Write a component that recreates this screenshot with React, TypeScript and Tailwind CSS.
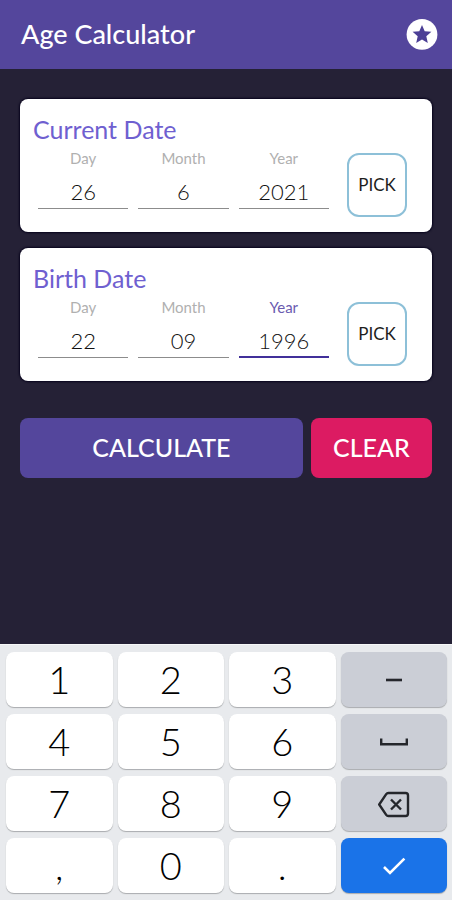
import { useState } from "react";
import type { ReactNode } from "react";
import clsx from "clsx";

type FieldProps = {
  id: string;
  label: string;
  value: string;
  active?: boolean;
};

const Field = ({ id, label, value, active }: FieldProps) => {
  const [text, setText] = useState(value);

  return (
    <div className="flex min-w-0 flex-1 flex-col text-center">
      <label
        htmlFor={id}
        className={clsx(
          "text-[15px] leading-[18px]",
          active ? "text-[#6a5bb0]" : "text-[#b0b0b0]"
        )}
      >
        {label}
      </label>
      <input
        id={id}
        inputMode="numeric"
        value={text}
        onChange={(e) => setText(e.target.value)}
        className={clsx(
          "h-[42px] w-full pt-2 text-center text-[22px] font-light text-[#111111] outline-none",
          active ? "border-b-2 border-[#41309a]" : "border-b border-[#8c8c8c]"
        )}
      />
    </div>
  );
};

type DateCardProps = {
  title: string;
  children: ReactNode;
};

const DateCard = ({ title, children }: DateCardProps) => {
  return (
    <section className="rounded-lg bg-white pt-[14px] pr-[25px] pb-[15px] pl-[13px] shadow-[0_0_2px_1px_#07031c]">
      <h2 className="text-[25px] leading-8 text-[#6f60d0]">{title}</h2>
      <div className="mt-1 flex pl-[5px]">
        <div className="flex flex-1 gap-[10px]">{children}</div>
        <button
          type="button"
          className="mt-1 ml-[18px] h-16 w-[60px] rounded-xl border-2 border-[#8dc0d8] text-[17px] text-[#1d1d1d]"
        >
          PICK
        </button>
      </div>
    </section>
  );
};

type KeyProps = {
  label?: string;
  tone?: "light" | "grey" | "blue";
  children: ReactNode;
};

const Key = ({ label, tone = "light", children }: KeyProps) => {
  return (
    <button
      type="button"
      aria-label={label}
      className={clsx(
        "flex h-[55px] items-center justify-center rounded-lg text-[38px] font-light shadow-[0_1px_1px_#a9abae]",
        tone === "light" && "bg-white text-black",
        tone === "grey" && "bg-[#cbced6] text-[#25272c]",
        tone === "blue" && "bg-[#1a73e8] text-white"
      )}
    >
      {children}
    </button>
  );
};

const Keypad = () => {
  return (
    <div className="grid grid-cols-4 gap-x-[5px] gap-y-[7px] border-t border-[#f6f7f8] bg-[#e8eaed] pt-[7px] pr-[5px] pb-[7px] pl-[6px]">
      <Key>1</Key>
      <Key>2</Key>
      <Key>3</Key>
      <Key label="Minus" tone="grey">
        <svg width="32" height="32" viewBox="0 0 32 32" fill="none" stroke="currentColor">
          <path d="M8 16H24" strokeWidth="2.6" />
        </svg>
      </Key>
      <Key>4</Key>
      <Key>5</Key>
      <Key>6</Key>
      <Key label="Space" tone="grey">
        <svg width="32" height="32" viewBox="0 0 32 32" fill="none" stroke="currentColor">
          <path d="M3.2 12.4V18.2H28.8V12.4" strokeWidth="2.4" />
        </svg>
      </Key>
      <Key>7</Key>
      <Key>8</Key>
      <Key>9</Key>
      <Key label="Backspace" tone="grey">
        <svg width="32" height="32" viewBox="0 0 32 32" fill="none" stroke="currentColor">
          <path
            d="M10.4 5H27.6Q30 5 30 7.4V25.6Q30 28 27.6 28H10.4Q9 28 8.2 26.8L1.2 16.5L8.2 6.2Q9 5 10.4 5Z"
            strokeWidth="2.4"
            strokeLinejoin="round"
          />
          <path d="M13 11.5L23 21.5M23 11.5L13 21.5" strokeWidth="2.4" />
        </svg>
      </Key>
      <Key>,</Key>
      <Key>0</Key>
      <Key>.</Key>
      <Key label="Done" tone="blue">
        <svg width="32" height="32" viewBox="0 0 32 32" fill="none" stroke="currentColor">
          <path d="M6 17L12 23L26.4 8.6" strokeWidth="2.6" />
        </svg>
      </Key>
    </div>
  );
};

export default function App() {
  return (
    <div className="flex min-h-screen flex-col bg-[#252136] font-['Lato',sans-serif]">
      <header className="flex h-[69px] items-center justify-between bg-[#54469c] pr-[14px] pl-[21px]">
        <h1 className="text-[27px] font-medium text-white">Age Calculator</h1>
        <button type="button" aria-label="Rate this app">
          <svg width="32" height="32" viewBox="0 0 32 32">
            <circle cx="16" cy="15.4" r="15.4" fill="#fff" />
            <path
              d="M16 6L18.7 12.2L25.4 12.8L20.3 17.3L21.8 24L16 20.5L10.2 24L11.7 17.3L6.6 12.8L13.3 12.2Z"
              fill="#4c3f96"
            />
          </svg>
        </button>
      </header>

      <main className="flex-1 px-5 pt-[30px]">
        <div className="flex flex-col gap-4">
          <DateCard title="Current Date">
            <Field id="current-day" label="Day" value="26" />
            <Field id="current-month" label="Month" value="6" />
            <Field id="current-year" label="Year" value="2021" />
          </DateCard>
          <DateCard title="Birth Date">
            <Field id="birth-day" label="Day" value="22" />
            <Field id="birth-month" label="Month" value="09" />
            <Field id="birth-year" label="Year" value="1996" active />
          </DateCard>
        </div>

        <div className="mt-[37px] flex gap-2 text-[25px] font-medium text-white">
          <button type="button" className="h-[60px] flex-[7] rounded-lg bg-[#54469c]">
            CALCULATE
          </button>
          <button type="button" className="h-[60px] flex-[3] rounded-lg bg-[#dc1b62]">
            CLEAR
          </button>
        </div>
      </main>

      <Keypad />
    </div>
  );
}
